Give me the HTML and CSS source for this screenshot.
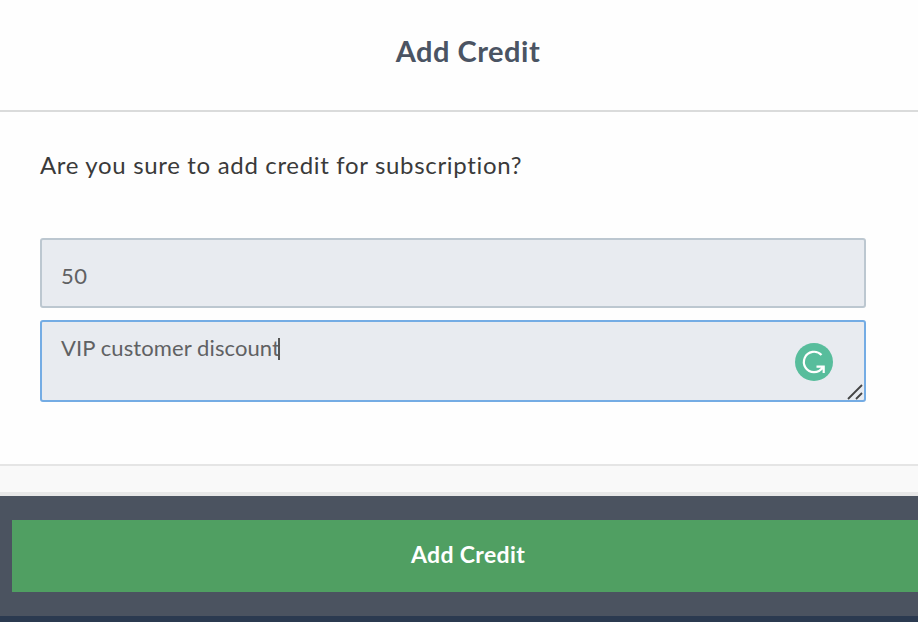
FILE: index.html
```html
<!DOCTYPE html>
<html lang="en">
<head>
<meta charset="utf-8">
<title>Add Credit</title>
<link rel="stylesheet" href="styles.css">
</head>
<body>
<main class="dialog">
  <header class="header"><h1 class="title"><span>Add Credit</span></h1></header>
  <section class="content">
    <p class="question">Are you sure to add credit for subscription?</p>
    <div class="field amount"><span>50</span></div>
    <div class="field note">
      <span class="note-text">VIP customer discount</span><i class="caret"></i>
      <svg class="badge" viewBox="0 0 38 38"><circle cx="19" cy="19" r="19" fill="#58bd9c"/><path d="M26.5 12A10.2 10.2 0 1 0 19 29.2C23.5 29.2 26 27 28.2 23.8M21.5 23.6H28.7V30" fill="none" stroke="#fff" stroke-width="2.2"/></svg>
      <svg class="grip" viewBox="0 0 16 16"><path d="M1 15 15 1M9 15 15 9" fill="none" stroke="#444" stroke-width="1.8"/></svg>
    </div>
  </section>
  <div class="gap"></div>
  <footer class="footer"><button class="submit"><span>Add Credit</span></button></footer>
</main>
</body>
</html>
```
FILE: styles.css
```css
* { box-sizing: border-box; }
body { margin: 0; background: #fefefe; font-family: Lato, sans-serif; font-variant-ligatures: none; }
.dialog { display: flex; flex-direction: column; height: 622px; overflow: hidden; }
.header { height: 112px; border-bottom: 2px solid #dadbdb; padding-left: 18px; }
.title { margin: 0; padding-top: 31px; font: 700 29px/40px Lato, sans-serif; letter-spacing: .5px; text-align: center; color: #4b5463; }
.content { height: 354px; padding: 33px 52px 0 40px; border-bottom: 2px solid #e5e5e5; }
.question { margin: 0 0 53px; font-size: 24px; line-height: 40px; letter-spacing: .67px; color: #3a3a3a; white-space: nowrap; }
.field { border: 2px solid #bcc7d0; border-radius: 3px; background: #e8ebf0; color: #606163; font-size: 22px; padding-left: 19px; }
.amount { height: 70px; line-height: 71px; margin-bottom: 12px; letter-spacing: .6px; }
.note { position: relative; height: 82px; border-color: #74ace4; line-height: 52px; letter-spacing: .1px; white-space: nowrap; }
.caret { position: absolute; left: 236px; top: 16px; width: 2px; height: 22px; background: #555; }
.badge { position: absolute; right: 31px; top: 21px; width: 38px; height: 38px; }
.grip { position: absolute; right: 1px; bottom: 0; width: 16px; height: 16px; }
.gap { height: 30px; background: #f9f9f9; border-bottom: 4px solid #e8e8e8; }
.footer { height: 126px; padding: 24px 0 0 12px; background: #4b5360; border-bottom: 6px solid #2b3a50; }
.submit { display: block; width: 100%; height: 72px; border: 0; padding: 0 0 5px 6px; background: #509f62; color: #fff; font: 700 23px Lato, sans-serif; letter-spacing: .35px; }
```
